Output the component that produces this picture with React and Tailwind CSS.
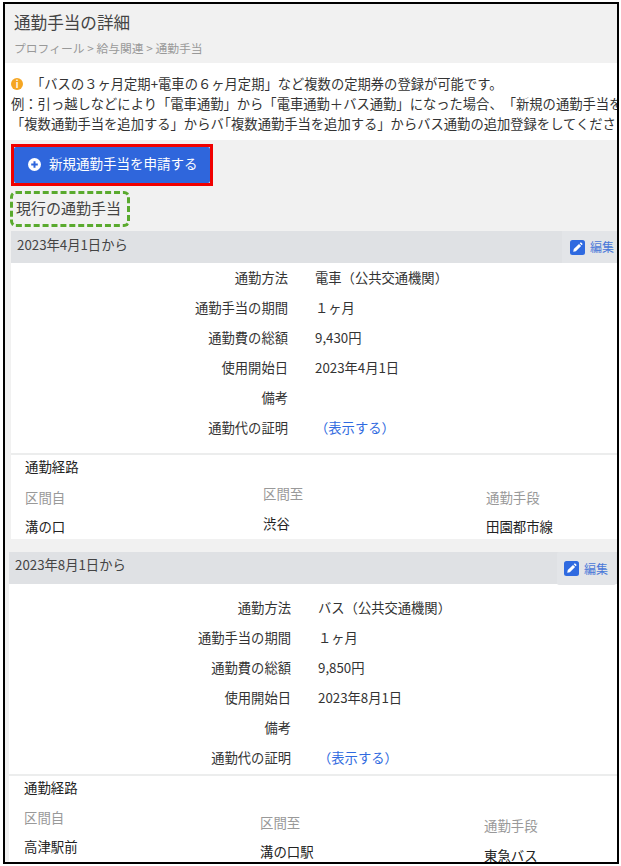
import React from 'react';

const font = { fontFamily: '"Noto Sans CJK JP", "Noto Sans", sans-serif' };

const EditIcon = () => (
  <svg width="15" height="15" viewBox="0 0 15 15" className="shrink-0">
    <rect width="15" height="15" rx="2.5" fill="#2f6ae0" />
    <path d="M3.2 11.8l.6-2.7 5.2-5.2 2.1 2.1-5.2 5.2z" fill="#fff" />
    <path d="M9.7 3.2l.7-.6c.3-.2.6-.2.8 0l1.2 1.2c.2.2.2.5 0 .8l-.7.7z" fill="#fff" />
  </svg>
);

const InfoRow = ({ label, children, labelWidth }) => (
  <div className="flex h-[30px] items-center pb-[2px] text-[13.3px] text-[#333]">
    <div className={`${labelWidth} shrink-0 text-right`}>{label}</div>
    <div className="ml-[27px]">{children}</div>
  </div>
);

const RouteCol = ({ className, labelClass, valueClass, label, value }) => (
  <div className={className}>
    <div className={`text-[13.4px] text-[#999] ${labelClass}`}>{label}</div>
    <div className={`text-[13.4px] text-[#222] ${valueClass}`}>{value}</div>
  </div>
);

const Allowance = ({ date, method, total, start, first }) => {
  const labelWidth = first ? 'w-[277px]' : 'w-[282px]';
  return (
    <section>
      <div className={first ? 'ml-[6px] flex h-[32px] bg-[#dfe1e4]' : 'ml-[4px] flex h-[32px] bg-[#dfe1e4]'}>
        <div className={first ? 'pl-[6px] pt-[4px] text-[13.3px] text-[#444]' : 'pl-[6px] pt-[3px] text-[13.3px] text-[#444]'}>{date}</div>
        <div
          className={
            first
              ? 'ml-auto flex h-[32px] w-[55px] items-center gap-[5px] bg-[#e3e5e8] pl-[8px] text-[12px] text-[#4a78d8]'
              : 'ml-auto mr-[1px] flex h-[33px] w-[59px] items-center gap-[5px] rounded-[2px] bg-[#e3e5e8] pl-[7px] text-[12px] text-[#4a78d8]'
          }
        >
          <EditIcon />
          <span>編集</span>
        </div>
      </div>
      <div className={first ? 'ml-[6px] bg-white' : 'ml-[4px] bg-white'}>
        <div className={first ? 'pt-[1px]' : 'pt-[10px]'}>
          <InfoRow labelWidth={labelWidth} label="通勤方法">{method}</InfoRow>
          <InfoRow labelWidth={labelWidth} label="通勤手当の期間">１ヶ月</InfoRow>
          <InfoRow labelWidth={labelWidth} label="通勤費の総額">{total}</InfoRow>
          <InfoRow labelWidth={labelWidth} label="使用開始日">{start}</InfoRow>
          <InfoRow labelWidth={labelWidth} label="備考" />
          <InfoRow labelWidth={labelWidth} label="通勤代の証明"><span className="text-[#2f6ae0]">（表示する）</span></InfoRow>
        </div>
        <div className={first ? 'mt-[9px] border-t-2 border-[#eceded] pl-[14px] pt-[1px]' : 'border-t-2 border-[#eceded] pl-[15px] pt-[1px]'}>
          <div className="text-[13.4px] text-[#222]">通勤経路</div>
          {first ? (
            <div className="mt-[11px] flex h-[52px]">
              <RouteCol className="w-[238px]" labelClass="" valueClass="mt-[9px]" label="区間自" value="溝の口" />
              <RouteCol className="w-[223px]" labelClass="-mt-[4px]" valueClass="mt-[10px]" label="区間至" value="渋谷" />
              <RouteCol className="w-[100px]" labelClass="" valueClass="mt-[9px]" label="通勤手段" value="田園都市線" />
            </div>
          ) : (
            <div className="mt-[10px] flex h-[70px]">
              <RouteCol className="w-[236px]" labelClass="" valueClass="mt-[9px]" label="区間自" value="高津駅前" />
              <RouteCol className="w-[224px]" labelClass="mt-[5px]" valueClass="mt-[9px]" label="区間至" value="溝の口駅" />
              <RouteCol className="w-[100px]" labelClass="mt-[8px]" valueClass="mt-[10px]" label="通勤手段" value="東急バス" />
            </div>
          )}
        </div>
      </div>
    </section>
  );
};

export default function App() {
  return (
    <div className="h-[866px] w-[621px] overflow-hidden bg-white [text-spacing-trim:space-all]" style={font}>
      <div className="ml-[3px] mt-[2px] h-[862px] w-[616px] overflow-hidden border-2 border-black bg-[#f1f1f1]">
        <header className="h-[59px] pl-[9px] pt-[6px]">
          <h1 className="text-[16.6px] leading-[24px] text-[#444]">通勤手当の詳細</h1>
          <p className="mt-[6px] text-[11.8px] leading-[16px] text-[#999]">プロフィール &gt; 給与関連 &gt; 通勤手当</p>
        </header>

        <div className="h-[77px] whitespace-nowrap bg-white pl-[6px] pt-[11px] text-[13.3px] leading-[20px] text-[#333]">
          <div className="flex items-center">
            <span className="flex h-[12px] w-[12px] items-center justify-center rounded-full bg-[#f5a623] text-[9px] font-bold leading-none text-white">i</span>
            <span className="ml-[8px]">「バスの３ヶ月定期+電車の６ヶ月定期」など複数の定期券の登録が可能です。</span>
          </div>
          <div>例：引っ越しなどにより「電車通勤」から「電車通勤＋バス通勤」になった場合、「新規の通勤手当を申請する」</div>
          <div>「複数通勤手当を追加する」からバ<span className="-ml-[6px]">「複数通勤手当を追加する」からバス通勤の追加登録をしてください。</span></div>
        </div>

        <div className="ml-[6px] mt-[4px] h-[42px] w-[202px] border-[3px] border-[#f00000]">
          <button className="flex h-[36px] w-[196px] items-center rounded-[2px] bg-[#2f66dc] pb-[3px] pl-[14px] text-[13.5px] text-white">
            <svg width="13" height="13" viewBox="0 0 13 13" className="shrink-0 translate-y-[1px]">
              <circle cx="6.5" cy="6.5" r="6.5" fill="#fff" />
              <path d="M6.5 3.2v6.6M3.2 6.5h6.6" stroke="#2f66dc" strokeWidth="2" />
            </svg>
            <span className="ml-[8px]">新規通勤手当を申請する</span>
          </button>
        </div>

        <div className="ml-[5px] mt-[5px] flex h-[36px] w-[120px] items-center rounded-[6px] border-[3px] border-dashed border-[#5aaa2e] pb-[2px] pl-[3px] text-[15px] text-[#444]">
          現行の通勤手当
        </div>

        <div className="mt-[4px]">
          <Allowance first date="2023年4月1日から" method="電車（公共交通機関）" total="9,430円" start="2023年4月1日" />
        </div>
        <div className="mt-[13px]">
          <Allowance date="2023年8月1日から" method="バス（公共交通機関）" total="9,850円" start="2023年8月1日" />
        </div>
      </div>
    </div>
  );
}
